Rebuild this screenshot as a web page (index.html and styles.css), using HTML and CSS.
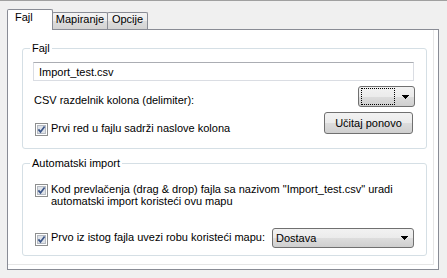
FILE: index.html
```html
<!DOCTYPE html>
<html lang="sr">
<head>
    <meta charset="UTF-8">
    <meta name="viewport" content="width=device-width, initial-scale=1.0">
    <title>Import - podešavanja</title>
    <link rel="stylesheet" href="styles.css">
</head>
<body>
    <div class="tabs">
        <div class="tab selected">Fajl</div>
        <div class="tab tab-map">Mapiranje</div>
        <div class="tab tab-opt">Opcije</div>
    </div>

    <div class="panel">
        <div class="page">

            <fieldset class="group group-file">
                <legend>Fajl</legend>
                <input type="text" class="file-input" value="Import_test.csv">

                <div class="row row-delim">
                    <span class="label">CSV razdelnik kolona (delimiter):</span>
                    <div class="combo combo-small">
                        <span class="focus-rect"></span>
                        <svg class="arrow" width="7" height="4" viewBox="0 0 7 4"><path d="M0 0h7v1h-1v1h-1v1h-1v1h-1v-1h-1v-1h-1v-1h-1z" fill="#000"/></svg>
                    </div>
                </div>

                <div class="row row-header">
                    <label class="check">
                        <svg width="13" height="13" viewBox="0 0 13 13"><rect x="0.5" y="0.5" width="12" height="12" fill="#fff" stroke="#8e8f8f"/><rect x="2.5" y="2.5" width="8" height="8" fill="#dfe3e9" stroke="#b6bbc2"/><path d="M3.4 6.4 L5.5 8.9 L9.6 3.4" fill="none" stroke="#3c5689" stroke-width="1.7"/></svg>
                        Prvi red u fajlu sadrži naslove kolona
                    </label>
                    <button class="btn">Učitaj ponovo</button>
                </div>
            </fieldset>

            <fieldset class="group group-auto">
                <legend>Automatski import</legend>
                <label class="check check-multi">
                    <svg width="13" height="13" viewBox="0 0 13 13"><rect x="0.5" y="0.5" width="12" height="12" fill="#fff" stroke="#8e8f8f"/><rect x="2.5" y="2.5" width="8" height="8" fill="#dfe3e9" stroke="#b6bbc2"/><path d="M3.4 6.4 L5.5 8.9 L9.6 3.4" fill="none" stroke="#3c5689" stroke-width="1.7"/></svg>
                    <span>Kod prevlačenja (drag &amp; drop) fajla sa nazivom "Import_test.csv" uradi<br>automatski import koristeći ovu mapu</span>
                </label>

                <div class="row row-map">
                    <label class="check">
                        <svg width="13" height="13" viewBox="0 0 13 13"><rect x="0.5" y="0.5" width="12" height="12" fill="#fff" stroke="#8e8f8f"/><rect x="2.5" y="2.5" width="8" height="8" fill="#dfe3e9" stroke="#b6bbc2"/><path d="M3.4 6.4 L5.5 8.9 L9.6 3.4" fill="none" stroke="#3c5689" stroke-width="1.7"/></svg>
                        Prvo iz istog fajla uvezi robu koristeći mapu:
                    </label>
                    <div class="combo combo-map">
                        <span>Dostava</span>
                        <svg class="arrow" width="7" height="4" viewBox="0 0 7 4"><path d="M0 0h7v1h-1v1h-1v1h-1v1h-1v-1h-1v-1h-1v-1h-1z" fill="#000"/></svg>
                    </div>
                </div>
            </fieldset>

        </div>
    </div>
</body>
</html>
```

FILE: styles.css
```css
/* --- izgled dijaloga (Win7 stil) --- */
* {
    box-sizing: border-box;
}

body {
    margin: 0;
    height: 278px;
    overflow: hidden;
    background-color: #f0f0f0;
    border-top: 1px solid #a0a0a0;
    font-family: "Liberation Sans", Arial, sans-serif;
    font-size: 11px;
    color: #000;
}

/* tabovi */
.tabs {
    position: relative;
    z-index: 2;
    display: flex;
    align-items: flex-end;
    height: 20px;
    margin: 8px 0 0 7px;
}

.tab {
    height: 17px;
    margin-left: -1px;
    border: 1px solid #898c95;
    border-bottom: none;
    border-radius: 2px 2px 0 0;
    background: linear-gradient(#f3f3f3, #ebebeb 50%, #dddddd 50%, #d3d3d3);
    line-height: 13px;
    text-align: center;
    white-space: nowrap;
}

.tab.selected {
    position: relative;
    z-index: 1;
    width: 46px;
    height: 21px;
    margin-left: 0;
    margin-bottom: -1px;
    padding-left: 7px;
    background: #fff;
    line-height: 15px;
    text-align: left;
}

.tab-map {
    width: 56px;
}

.tab-opt {
    width: 41px;
}

/* sadržaj taba */
.panel {
    width: 432px;
    height: 241px;
    margin-left: 7px;
    border: 1px solid #898c95;
    background-color: #fff;
}

.page {
    width: 426px;
    height: 235px;
    padding: 12px 0 0 14px;
    border-right: 1px solid #e6e6e6;
    border-bottom: 1px solid #e6e6e6;
}

.group {
    width: 405px;
    margin: 0;
    padding: 0;
    min-inline-size: 0;
    border: 1px solid #d5dfe5;
    border-radius: 3px;
}

.group legend {
    margin-left: 7px;
    padding: 0 2px;
    line-height: 13px;
}

.group-file {
    height: 107px;
}

.group-auto {
    height: 99px;
    margin-top: 8px;
}

.file-input {
    display: block;
    width: 381px;
    height: 19px;
    margin: 7px 0 0 10px;
    padding: 0 5px;
    border: 1px solid #dadde3;
    border-top-color: #abadb3;
    font: inherit;
    color: #000;
    outline: none;
}

.row {
    display: flex;
    justify-content: space-between;
    align-items: flex-start;
    white-space: nowrap;
}

.row-delim {
    height: 21px;
    margin-top: 5px;
    padding: 0 11px;
}

.row-delim .label {
    padding-top: 7px;
    line-height: 15px;
}

.row-header {
    margin-top: 5px;
    padding: 0 13px 0 12px;
}

.row-header .check {
    margin-top: 9px;
}

.check {
    display: flex;
    align-items: flex-start;
    line-height: 15px;
    white-space: nowrap;
}

.check svg {
    flex: none;
    margin: 2px 3px 0 0;
}

.check-multi {
    margin: 13px 0 0 12px;
    line-height: 12px;
}

.check-multi svg {
    margin-top: 1px;
}

.row-map {
    margin-top: 21px;
    padding: 0 12px;
}

.row-map .check {
    margin-top: 2px;
}

.row-map .check svg {
    margin-top: 3px;
}

/* kombo i dugme */
.combo,
.btn {
    border: 1px solid #707070;
    border-radius: 3px;
    background: linear-gradient(#f2f2f2, #ebebeb 50%, #dddddd 50%, #cfcfcf);
}

.combo {
    display: flex;
    align-items: center;
}

.combo .arrow {
    flex: none;
    margin-left: auto;
    margin-right: 5px;
}

.combo-small {
    width: 57px;
    height: 21px;
    padding-left: 2px;
}

.focus-rect {
    width: 34px;
    height: 17px;
    border: 1px dotted #000;
}

.combo-map {
    width: 142px;
    height: 20px;
    padding-left: 3px;
}

.btn {
    width: 89px;
    height: 22px;
    padding: 0;
    font: inherit;
    color: #000;
}
```
